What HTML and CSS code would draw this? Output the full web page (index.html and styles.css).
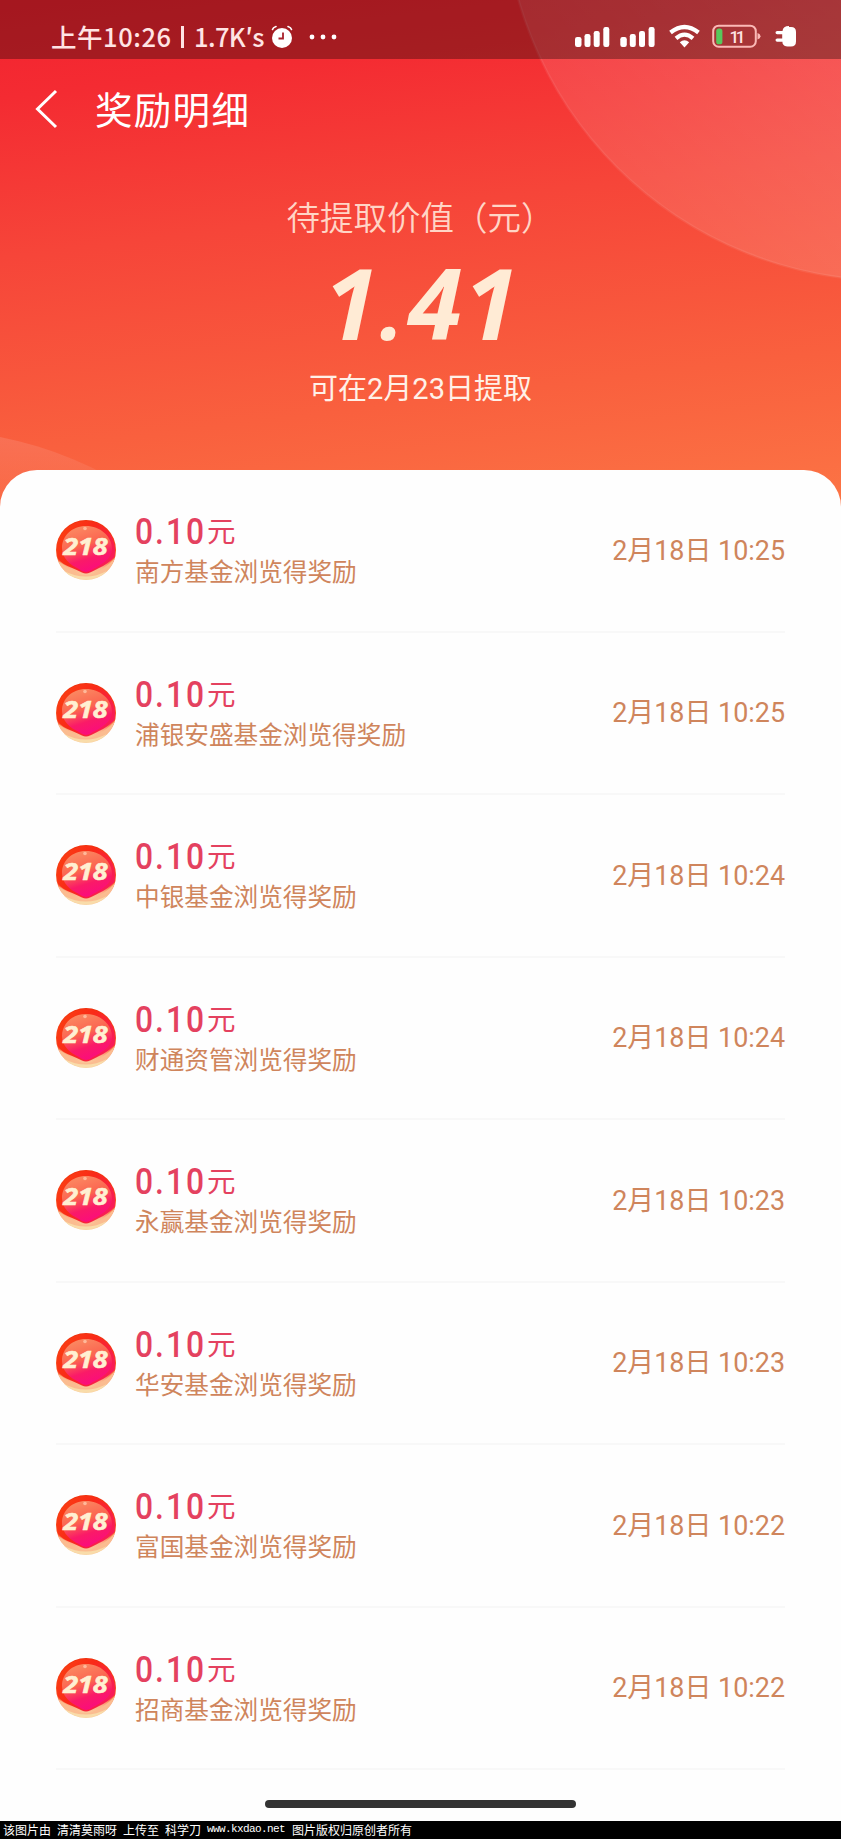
FILE: index.html
```html
<!DOCTYPE html>
<html lang="zh-CN">
<head>
<meta charset="utf-8">
<title>奖励明细</title>
<link rel="stylesheet" href="styles.css">
</head>
<body>
<svg class="defs" width="0" height="0" aria-hidden="true">
  <defs>
    <linearGradient id="rim" x1="0" y1="0" x2="0" y2="1">
      <stop offset="0" stop-color="#f0300c"/><stop offset="0.6" stop-color="#f94a1c"/><stop offset="0.8" stop-color="#fbb48a"/><stop offset="1" stop-color="#fad6a4"/>
    </linearGradient>
    <linearGradient id="shell" x1="0" y1="0" x2="1" y2="0.6">
      <stop offset="0" stop-color="#fb4410"/><stop offset="0.5" stop-color="#f92a18"/><stop offset="1" stop-color="#f81c58"/>
    </linearGradient>
    <linearGradient id="face" x1="0.3" y1="0" x2="0.65" y2="1">
      <stop offset="0" stop-color="#fb8a62"/><stop offset="0.42" stop-color="#fb6450"/><stop offset="0.7" stop-color="#fa1a68"/><stop offset="1" stop-color="#fb0a80"/>
    </linearGradient>
    <symbol id="badge" viewBox="0 0 62 62">
      <circle cx="31" cy="31" r="30" fill="url(#rim)"/>
      <path d="M3 42Q15 50 25 55Q31 57 37 55Q50 50 60 39Q56 52 44 57Q31 62 18 57Q7 52 3 42Z" fill="#fbbc90"/>
      <path d="M9 52Q31 63 52 52Q44 60 31 60.500Q17 60 9 52Z" fill="#f9dcaa"/>
      <path d="M31 2C47 2 60 15 60 31Q60 34 59.500 38Q53 45 44 49Q38 52 35 53.500Q31 55.500 27 53.500Q23 51.500 16 48.500Q7 45 3 40Q2 36 2 31C2 15 15 2 31 2Z" fill="url(#shell)"/>
      <path d="M31 7C45 7 57 17 57 30C57 40 46 46 38 50Q31 56 24 50C15 46 7 39 7 29C7 17 17 7 31 7Z" fill="url(#face)"/>
      <circle cx="30" cy="9.500" r="1.800" fill="#ffb89a"/>
      <text x="6.500" y="28.700" textLength="35.500" lengthAdjust="spacingAndGlyphs" transform="scale(1.25)" class="badge-text">218</text>
    </symbol>
  </defs>
</svg>
<header class="hero">
  <svg class="hero-art" viewBox="0 0 841 510" aria-hidden="true">
    <defs>
      <linearGradient id="orb" gradientUnits="userSpaceOnUse" x1="560" y1="200" x2="841" y2="0">
        <stop offset="0" stop-color="#fff" stop-opacity=".09"/><stop offset="1" stop-color="#fff" stop-opacity=".17"/>
      </linearGradient>
      <linearGradient id="orb2" gradientUnits="userSpaceOnUse" x1="0" y1="437" x2="0" y2="505">
        <stop offset="0" stop-color="#f9a090" stop-opacity=".28"/><stop offset="1" stop-color="#f9a090" stop-opacity=".05"/>
      </linearGradient>
    </defs>
    <circle cx="890.600" cy="-106.300" r="387" fill="url(#orb)" stroke="#fff" stroke-opacity=".07" stroke-width="2.500"/>
    <circle cx="-76" cy="819" r="389.500" fill="url(#orb2)"/>
  </svg>
  <div class="status">
    <span class="clock">上午10:26</span><span class="bar"></span><span class="speed">1.7K′s</span>
    <svg class="alarm" width="22" height="24" viewBox="0 0 22 24"><circle cx="11" cy="13" r="10" fill="#fff"/><path d="M1.500 4.500Q2 2.500 5 1.500M20.500 4.500Q20 2.500 17 1.500" stroke="#fff" stroke-width="1.600" fill="none" stroke-linecap="round"/><path d="M12 7.500V13.500H7.500" stroke="#a8202a" stroke-width="1.800" fill="none"/></svg>
    <svg class="more" width="28" height="6" viewBox="0 0 28 6" fill="#fff"><circle cx="3" cy="3" r="2.400"/><circle cx="14" cy="3" r="2.400"/><circle cx="25" cy="3" r="2.400"/></svg>
    <svg class="signals" width="224" height="26" viewBox="0 0 224 26" fill="#fff">
      <g id="bars"><rect x="0" y="13" width="6.500" height="10" rx="2.200"/><rect x="9.500" y="10" width="6" height="13" rx="2.200"/><rect x="18.700" y="7" width="6" height="16" rx="2.200"/><rect x="28.300" y="3" width="6" height="20" rx="2.200"/></g>
      <use href="#bars" x="45.300"/>
      <g fill="none" stroke="#fff" stroke-width="4.200"><path d="M95.500 8.500Q109.500-2.500 123.500 8.500"/><path d="M101 14.300Q109.500 7 118 14.300"/></g>
      <path d="M104.800 18.200Q109.500 14.200 114.200 18.200L109.500 23.500Z"/>
      <rect x="138.200" y="1.700" width="42.600" height="21" rx="5.500" fill="none" stroke="#fbb9b6" stroke-width="2"/>
      <path d="M182.500 9Q185.500 10 185.500 12.200Q185.500 14.500 182.500 15.500Z" fill="#fbb9b6"/>
      <rect x="141.200" y="4.500" width="6.200" height="15.800" rx="2.600" fill="#58c85c"/>
      <text x="154.500" y="18.800" textLength="16" class="level">11</text>
      <path d="M214 3h2q5 0 5 5v9.500q0 5-5 5h-3.500q-3.500 0-5-3.200v-1.600h-5.300q-1.700 0-1.700-1.600t1.700-1.600h5v-4.300h-5q-1.700 0-1.700-1.600t1.700-1.600h5.300q.5-5 6.500-5Z"/>
    </svg>
  </div>
  <nav class="nav">
    <svg class="back" width="24" height="40" viewBox="0 0 24 40"><path d="M22 2L3.500 20L22 38" fill="none" stroke="#fff" stroke-width="3"/></svg>
    <h1 class="title">奖励明细</h1>
  </nav>
  <div class="summary">
    <div class="label">待提取价值（元）</div>
    <div class="amount">1<span class="point">.</span>41</div>
    <div class="hint">可在2月23日提取</div>
  </div>
</header>
<main class="card">
  <ul class="list">
    <li class="row"><svg class="badge"><use href="#badge"/></svg><div class="info"><div class="money"><span class="num">0.10</span><span class="unit">元</span></div><div class="name">南方基金浏览得奖励</div></div><time class="time">2月18日 10:25</time></li>
    <li class="row"><svg class="badge"><use href="#badge"/></svg><div class="info"><div class="money"><span class="num">0.10</span><span class="unit">元</span></div><div class="name">浦银安盛基金浏览得奖励</div></div><time class="time">2月18日 10:25</time></li>
    <li class="row"><svg class="badge"><use href="#badge"/></svg><div class="info"><div class="money"><span class="num">0.10</span><span class="unit">元</span></div><div class="name">中银基金浏览得奖励</div></div><time class="time">2月18日 10:24</time></li>
    <li class="row"><svg class="badge"><use href="#badge"/></svg><div class="info"><div class="money"><span class="num">0.10</span><span class="unit">元</span></div><div class="name">财通资管浏览得奖励</div></div><time class="time">2月18日 10:24</time></li>
    <li class="row"><svg class="badge"><use href="#badge"/></svg><div class="info"><div class="money"><span class="num">0.10</span><span class="unit">元</span></div><div class="name">永赢基金浏览得奖励</div></div><time class="time">2月18日 10:23</time></li>
    <li class="row"><svg class="badge"><use href="#badge"/></svg><div class="info"><div class="money"><span class="num">0.10</span><span class="unit">元</span></div><div class="name">华安基金浏览得奖励</div></div><time class="time">2月18日 10:23</time></li>
    <li class="row"><svg class="badge"><use href="#badge"/></svg><div class="info"><div class="money"><span class="num">0.10</span><span class="unit">元</span></div><div class="name">富国基金浏览得奖励</div></div><time class="time">2月18日 10:22</time></li>
    <li class="row"><svg class="badge"><use href="#badge"/></svg><div class="info"><div class="money"><span class="num">0.10</span><span class="unit">元</span></div><div class="name">招商基金浏览得奖励</div></div><time class="time">2月18日 10:22</time></li>
  </ul>
  <div class="home-bar"></div>
</main>
<footer class="credit"><span>该图片由</span><span>清清莫雨呀</span><span>上传至</span><span>科学刀</span><span class="site">www.kxdao.net</span><span>图片版权归原创者所有</span></footer>
</body>
</html>
```
FILE: styles.css
```css
* { box-sizing: border-box; margin: 0; padding: 0; }
body {
  width: 841px;
  height: 1839px;
  overflow: hidden;
  display: flex;
  flex-direction: column;
  background: #fefefe;
  font-family: Roboto, "Noto Sans CJK SC", sans-serif;
}
svg { display: block; flex: none; }
.defs { position: absolute; }

.hero {
  position: relative;
  height: 510px;
  flex: none;
  background: linear-gradient(173deg, #f3222f 0%, #f42b32 16%, #f64539 42%, #f9603e 74%, #fc7545 100%);
}
.hero-art { position: absolute; inset: 0; width: 841px; height: 510px; }

.status {
  position: relative;
  height: 59px;
  padding: 15px 44px 0 51px;
  display: flex;
  align-items: center;
  background: rgba(0, 0, 0, .32);
  color: #ffe4e4;
  font: 500 25.5px/42px "Noto Sans CJK SC", sans-serif;
  white-space: nowrap;
}
.clock { width: 130px; height: 45px; letter-spacing: .55px; }
.bar { width: 3px; height: 22px; background: #ffe4e4; }
.speed { width: 75px; height: 45px; padding-left: 10px; letter-spacing: -.6px; }
.alarm { margin-left: 12px; }
.more { margin-left: 16px; }
.signals { margin-left: auto; margin-right: -2px; }
.level { font: 500 17px Roboto, sans-serif; fill: #ffe4e4; }

.nav {
  position: relative;
  display: flex;
  align-items: center;
  height: 100px;
  padding-left: 34px;
}
.title {
  height: 57px;
  margin-left: 37px;
  font: 400 37.5px/54px "Noto Sans CJK SC", sans-serif;
  letter-spacing: 1.3px;
  color: #fff;
}
.summary {
  position: relative;
  display: flex;
  flex-direction: column;
  align-items: center;
  padding-top: 32px;
  white-space: nowrap;
}
.label { font: 350 33.5px/50px "Noto Sans CJK SC", sans-serif; color: #ffd5c6; }
.amount {
  height: 96px;
  margin: 13px 0 0 3px;
  font: italic 700 98px/96px "Noto Sans", sans-serif;
  letter-spacing: 2px;
  color: #ffebd5;
}
.point { font-size: 84px; letter-spacing: 4px; line-height: 1; }
.hint { margin-top: 17px; font-size: 29px; line-height: 44px; color: #fff1e8; }

.card {
  position: relative;
  flex: 1;
  margin-top: -40.5px;
  padding: 0 56px;
  border-radius: 37px 37px 0 0;
  background: #fefefe;
}
.list { padding-top: .5px; list-style: none; }
.row {
  display: flex;
  align-items: center;
  height: 162.5px;
  border-bottom: 2px solid #f8f8f8;
}
.badge { width: 62px; height: 62px; margin: 0 18px 0 -1px; }
.badge-text { font: italic 700 19px "Noto Sans", sans-serif; fill: #fff0d2; stroke: #fff0d2; stroke-width: .5px; }
.info { flex: 1; padding-top: 1px; }
.money { display: flex; align-items: center; height: 41px; color: #e4415f; }
.num {
  width: 69px;
  font-size: 37px;
  font-weight: 500;
  letter-spacing: 2.3px;
  transform: scaleX(.86);
  transform-origin: left;
}
.unit { margin-left: 3px; font: 400 28.5px/40px "Noto Sans CJK SC", sans-serif; height: 43px; }
.name { height: 38px; font: 400 24.65px/36px "Noto Sans CJK SC", sans-serif; color: #cf855c; }
.time { padding-top: 1px; font-size: 26.9px; line-height: 40px; color: #cf855c; white-space: nowrap; }

.home-bar { width: 311px; height: 8px; margin: 29.5px auto 0; border-radius: 4px; background: #333; }

.credit {
  position: relative;
  display: flex;
  flex: none;
  gap: 6px;
  height: 18px;
  padding-left: 3px;
  background: #000;
  color: #fff;
  font: 400 12px/17px "Noto Sans CJK SC", sans-serif;
  white-space: nowrap;
}
.site { width: 79px; font: 400 11px/17px "Liberation Mono", monospace; letter-spacing: -.6px; }
```
